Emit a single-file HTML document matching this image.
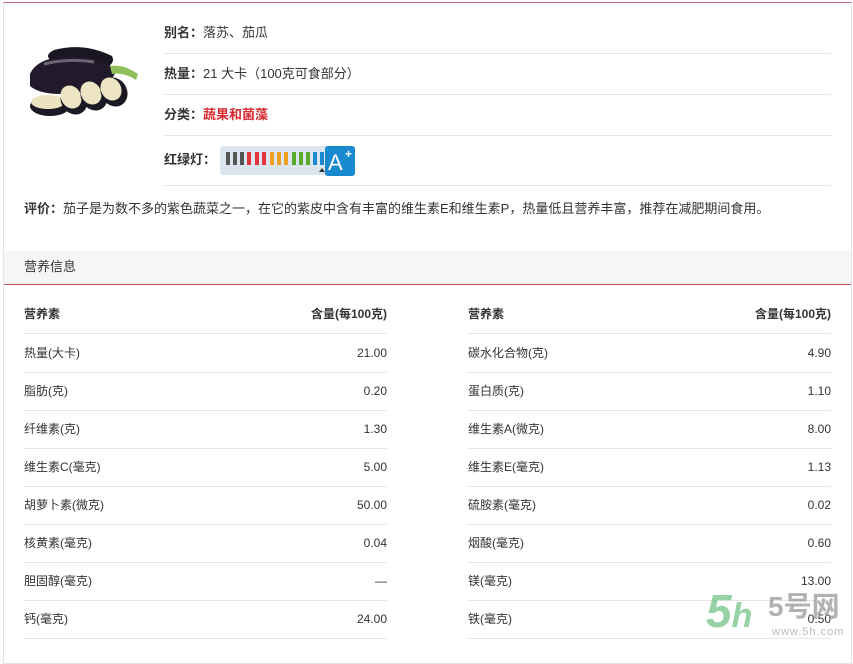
<!DOCTYPE html>
<html><head><meta charset="utf-8"><style>
body{margin:0;width:853px;height:639px;overflow:hidden;background:#fff;font-family:"Liberation Sans","Noto Sans CJK SC",sans-serif;font-size:12px;color:#333;position:relative}
.a{position:absolute}
.box{left:3px;top:2px;width:847px;height:660px;border:1px solid #e4e4e4;border-top:1px solid #c8707a}
.info{left:164px;width:667px;height:41px;line-height:41px;border-bottom:1px solid #e6e6e6;font-size:13px}
b{font-weight:bold}
.row{left:24px;width:363px;height:38px;border-bottom:1px solid #e6e6e6;line-height:38px}
.row span{float:right}
</style></head><body>
<div class="a box"></div>
<svg class="a" style="left:24px;top:42px" width="120" height="82" viewBox="0 0 120 82">
<path d="M30 8 Q60 0 88 14 Q92 22 80 26 Q50 24 30 20 Q18 14 30 8Z" fill="#1a1622"/>
<path d="M6 32 Q14 14 50 14 Q80 16 92 28 Q90 42 60 50 Q20 56 6 44Z" fill="#221a2a"/>
<path d="M20 22 Q45 16 70 20" stroke="#8a8494" stroke-width="3" fill="none" opacity=".7"/>
<path d="M86 24 Q100 22 114 32 L112 38 Q100 30 88 32Z" fill="#8fbe5a"/>
<ellipse cx="26" cy="64" rx="20" ry="10" fill="#1c1824"/><ellipse cx="24" cy="60" rx="17" ry="7" fill="#ece3c2"/>
<ellipse cx="50" cy="58" rx="13" ry="15" fill="#1c1824" transform="rotate(-30 50 58)"/><ellipse cx="47" cy="55" rx="10" ry="12" fill="#ede4c4" transform="rotate(-30 47 55)"/>
<ellipse cx="70" cy="54" rx="13" ry="15" fill="#1c1824" transform="rotate(-30 70 54)"/><ellipse cx="67" cy="51" rx="10" ry="12" fill="#ede4c4" transform="rotate(-30 67 51)"/>
<ellipse cx="90" cy="50" rx="13" ry="15" fill="#1c1824" transform="rotate(-30 90 50)"/><ellipse cx="87" cy="47" rx="10" ry="12" fill="#ede4c4" transform="rotate(-30 87 47)"/>
</svg>
<div class="a info" style="top:12px"><b>别名：</b>落苏、茄瓜</div>
<div class="a info" style="top:53px"><b>热量：</b>21 大卡（100克可食部分）</div>
<div class="a info" style="top:94px"><b>分类：</b><b style="color:#d8282e">蔬果和菌藻</b></div>
<div class="a info" style="top:135px;height:50px;line-height:50px"><b>红绿灯：</b></div>
<div class="a" style="left:220px;top:146px;width:134px;height:29px;background:#dce4ef;border-radius:3px"></div>
<svg class="a" style="left:220px;top:146px" width="135" height="30">
<g stroke-width="4"><line x1="8" y1="6" x2="8" y2="19" stroke="#555"/><line x1="15" y1="6" x2="15" y2="19" stroke="#555"/><line x1="22" y1="6" x2="22" y2="19" stroke="#555"/><line x1="29" y1="6" x2="29" y2="19" stroke="#e0353a"/><line x1="37" y1="6" x2="37" y2="19" stroke="#e0353a"/><line x1="44" y1="6" x2="44" y2="19" stroke="#e0353a"/><line x1="52" y1="6" x2="52" y2="19" stroke="#f0a020"/><line x1="59" y1="6" x2="59" y2="19" stroke="#f0a020"/><line x1="66" y1="6" x2="66" y2="19" stroke="#f0a020"/><line x1="74" y1="6" x2="74" y2="19" stroke="#5aaa2a"/><line x1="81" y1="6" x2="81" y2="19" stroke="#5aaa2a"/><line x1="88" y1="6" x2="88" y2="19" stroke="#5aaa2a"/><line x1="95" y1="6" x2="95" y2="19" stroke="#1a8ad0"/><line x1="102" y1="6" x2="102" y2="19" stroke="#1a8ad0"/></g>
<path d="M99 26 L102 22 L105 26Z" fill="#333"/>
<rect x="105" y="0" width="30" height="30" rx="3" fill="#1a8ad0"/>
<text x="108" y="24" fill="#fff" font-size="22" font-family="Liberation Sans">A</text><text x="125" y="12" fill="#fff" font-size="12" font-weight="bold">+</text>
</svg>
<div class="a" style="left:24px;top:198px;font-size:13px"><b>评价：</b>茄子是为数不多的紫色蔬菜之一，在它的紫皮中含有丰富的维生素E和维生素P，热量低且营养丰富，推荐在减肥期间食用。</div>
<div class="a" style="left:4px;top:250px;width:847px;height:34px;background:#f6f6f6;border-bottom:1px solid #c4505c;line-height:34px;font-size:13px"><span style="margin-left:20px">营养信息</span></div>

<div class="a row" style="top:295px"><b>营养素</b><span><b>含量(每100克)</b></span></div>
<div class="a row" style="top:334px">热量(大卡)<span>21.00</span></div>
<div class="a row" style="top:372px">脂肪(克)<span>0.20</span></div>
<div class="a row" style="top:410px">纤维素(克)<span>1.30</span></div>
<div class="a row" style="top:448px">维生素C(毫克)<span>5.00</span></div>
<div class="a row" style="top:486px">胡萝卜素(微克)<span>50.00</span></div>
<div class="a row" style="top:524px">核黄素(毫克)<span>0.04</span></div>
<div class="a row" style="top:562px">胆固醇(毫克)<span>—</span></div>
<div class="a row" style="top:600px">钙(毫克)<span>24.00</span></div>

<div class="a row" style="top:295px;left:468px"><b>营养素</b><span><b>含量(每100克)</b></span></div>
<div class="a row" style="top:334px;left:468px">碳水化合物(克)<span>4.90</span></div>
<div class="a row" style="top:372px;left:468px">蛋白质(克)<span>1.10</span></div>
<div class="a row" style="top:410px;left:468px">维生素A(微克)<span>8.00</span></div>
<div class="a row" style="top:448px;left:468px">维生素E(毫克)<span>1.13</span></div>
<div class="a row" style="top:486px;left:468px">硫胺素(毫克)<span>0.02</span></div>
<div class="a row" style="top:524px;left:468px">烟酸(毫克)<span>0.60</span></div>
<div class="a row" style="top:562px;left:468px">镁(毫克)<span>13.00</span></div>
<div class="a row" style="top:600px;left:468px">铁(毫克)<span>0.50</span></div>

<div class="a" style="left:706px;top:584px;font-size:46px;font-weight:bold;color:#7cc890;opacity:.8;font-style:italic;white-space:nowrap">5<span style="font-size:34px">h</span></div>
<div class="a" style="left:768px;top:590px;font-size:28px;line-height:34px;font-weight:bold;color:#999;opacity:.75;white-space:nowrap">5号网</div>
<div class="a" style="left:772px;top:626px;font-size:11px;color:#bbb;letter-spacing:1px;white-space:nowrap">www.5h.com</div>
</body></html>
